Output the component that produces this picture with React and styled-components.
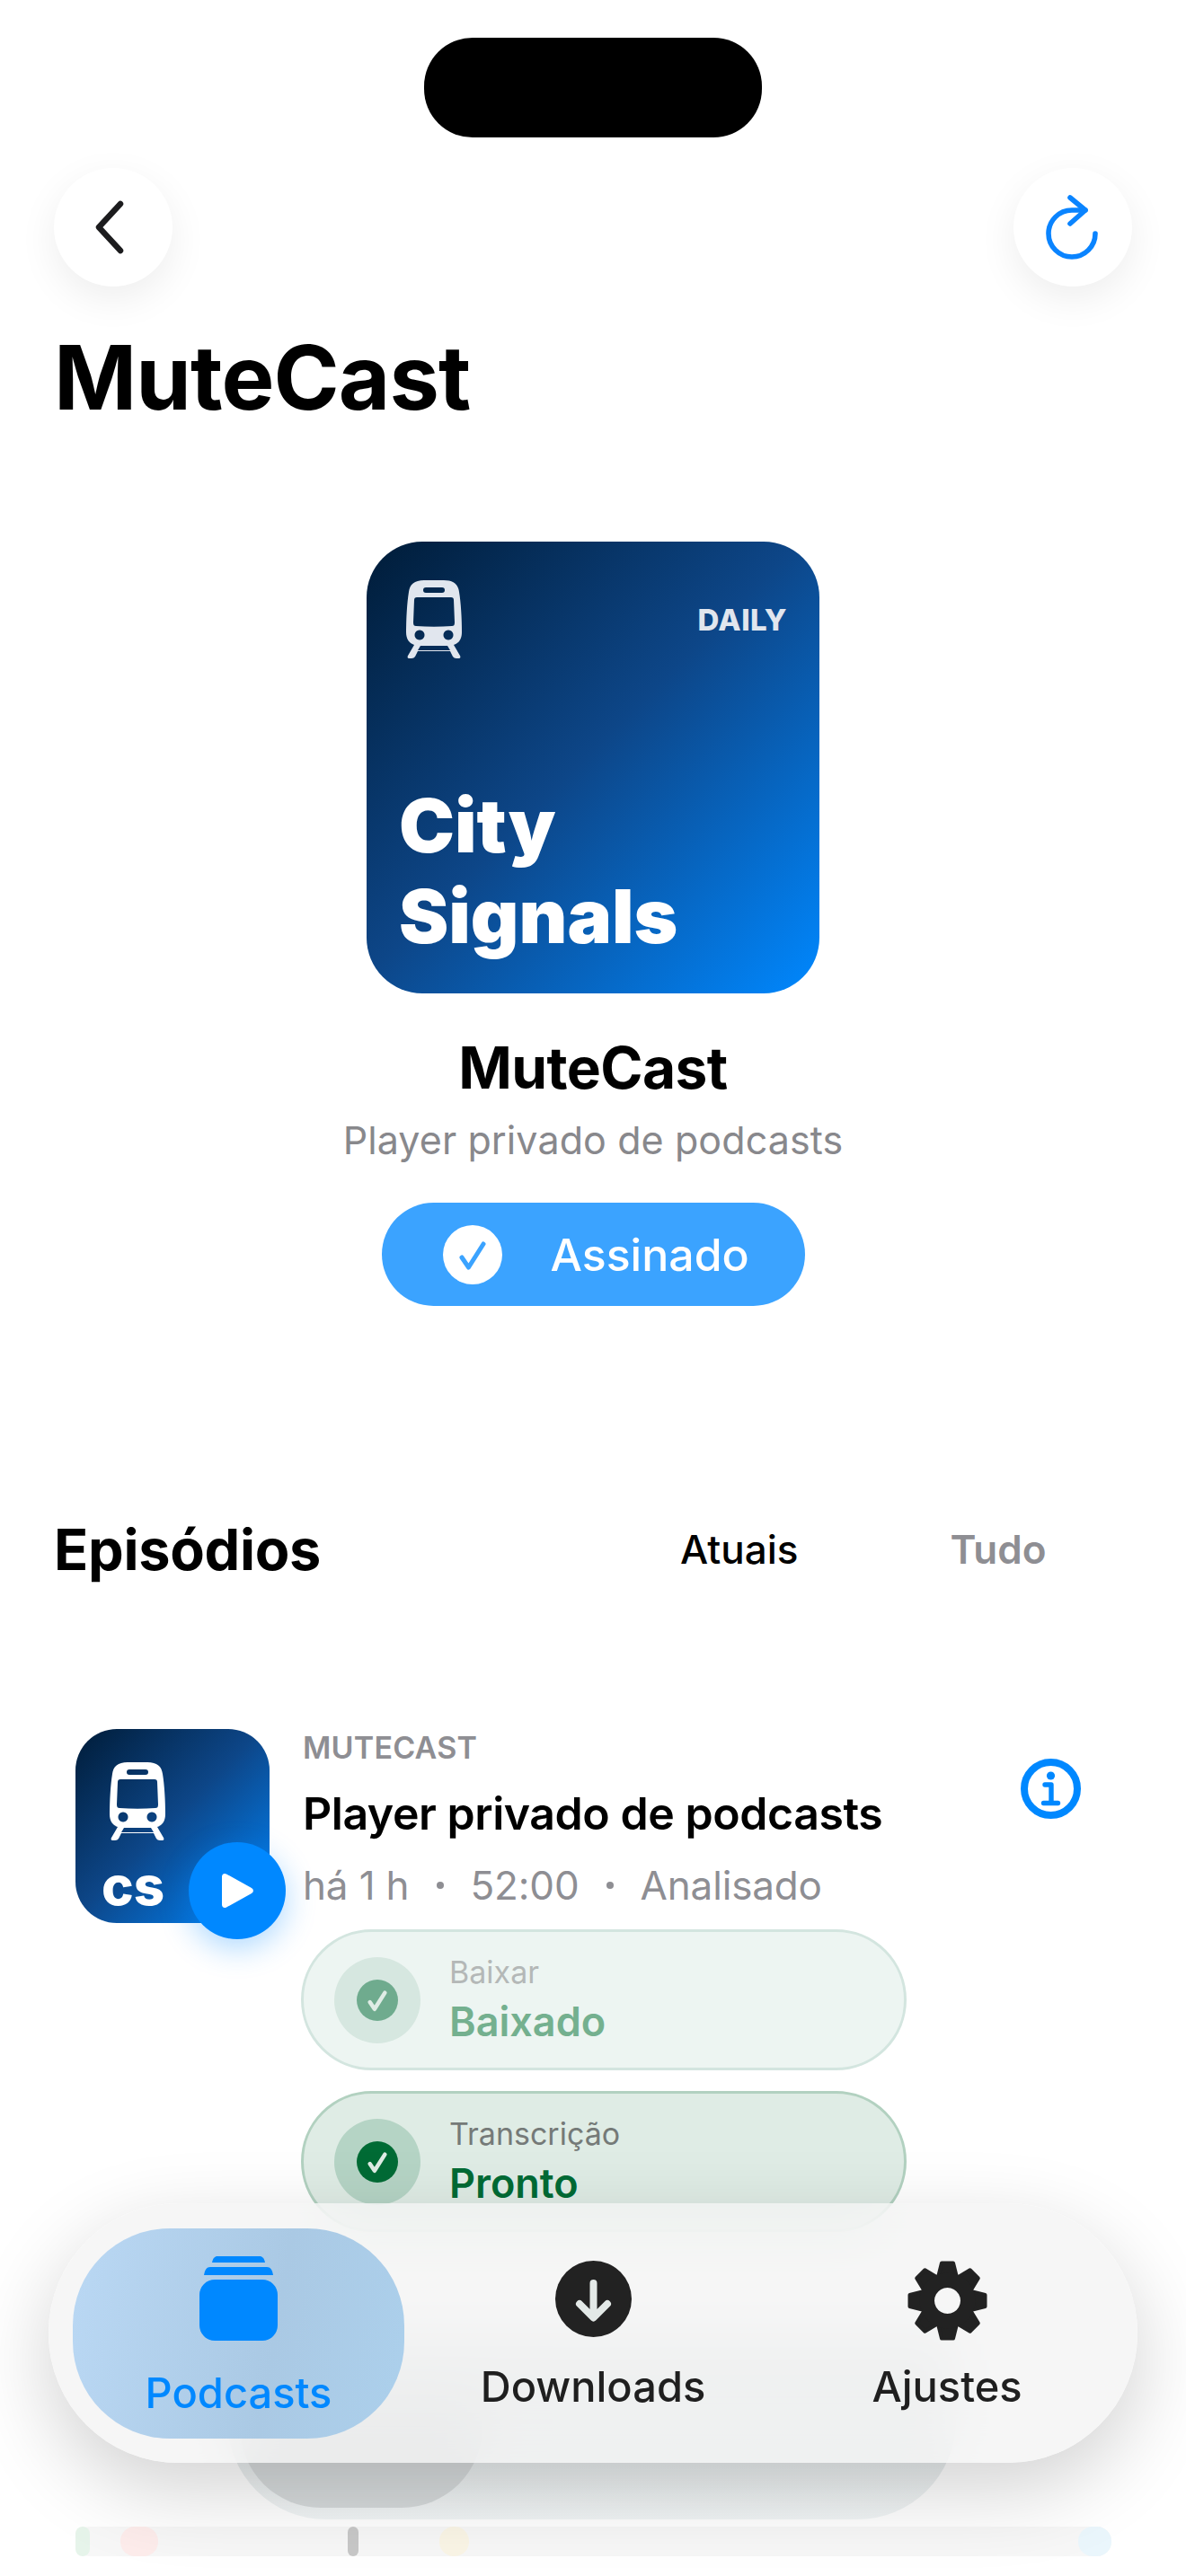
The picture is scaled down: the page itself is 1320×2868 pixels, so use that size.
import React from "react";
import styled, { createGlobalStyle } from "styled-components";

const GlobalStyle = createGlobalStyle`
  html, body { margin: 0; padding: 0; background: #fff; }
  body { font-family: Inter, "Liberation Sans", sans-serif; color: #000; }
`;

const Screen = styled.div`
  position: relative;
  width: 1320px;
  height: 2868px;
  overflow: hidden;
  background: #fff;
`;

const Island = styled.div`
  width: 376px;
  height: 111px;
  margin: 0 auto;
  border-radius: 54px;
  background: #000;
`;

const Content = styled.main`
  padding-top: 42px;
`;

const TopBar = styled.div`
  display: flex;
  justify-content: space-between;
  padding: 34px 60px 0;
`;

const RoundButton = styled.button`
  width: 132px;
  height: 132px;
  padding: 0;
  border: 0;
  border-radius: 50%;
  background: #fff;
  display: flex;
  align-items: center;
  justify-content: center;
  box-shadow: 0 14px 44px rgba(0, 0, 0, 0.07);
`;

const PageTitle = styled.h1`
  margin: 41px 0 0 60px;
  font-size: 99px;
  line-height: 120px;
  font-weight: 700;
  letter-spacing: -0.9px;
`;

const Hero = styled.section`
  display: flex;
  flex-direction: column;
  align-items: center;
  margin-top: 123px;
`;

const Artwork = styled.div`
  width: 504px;
  height: 503px;
  padding: 43px 36px 0;
  box-sizing: border-box;
  border-radius: 62px;
  background: linear-gradient(135deg, #001c38 0%, #0d4688 48%, #0088ff 100%);
  display: flex;
  flex-direction: column;
`;

const ArtTop = styled.div`
  display: flex;
  justify-content: space-between;
  align-items: flex-start;
  padding-left: 8px;
  color: #e1e6ee;
`;

const ArtTag = styled.span`
  margin-top: 25px;
  font-size: 33px;
  line-height: 38px;
  font-weight: 800;
  letter-spacing: 0.5px;
`;

const ArtTitle = styled.div`
  margin-top: 136px;
  font-size: 83px;
  line-height: 101px;
  font-weight: 900;
  color: #fff;
`;

const HeroName = styled.h2`
  margin: 44px 0 0;
  font-size: 64px;
  line-height: 78px;
  font-weight: 700;
  letter-spacing: -0.6px;
`;

const HeroSub = styled.p`
  margin: 15px 0 0;
  font-size: 43px;
  line-height: 52px;
  color: #88888c;
  font-weight: 400;
  letter-spacing: 0.1px;
`;

const SubscribeButton = styled.button`
  margin-top: 44px;
  width: 471px;
  height: 115px;
  padding: 0 0 0 68px;
  border: 0;
  border-radius: 58px;
  background: #3ba3ff;
  color: #fff;
  display: flex;
  align-items: center;
  gap: 54px;
  font: 500 50px/60px Inter, sans-serif;
`;

const CheckDisc = styled.span`
  width: 66px;
  height: 66px;
  border-radius: 50%;
  background: #fff;
  line-height: 0;
`;

const SectionHead = styled.div`
  display: flex;
  align-items: center;
  margin-top: 233px;
  padding-left: 60px;
`;

const SectionTitle = styled.h2`
  margin: 0;
  width: 697px;
  font-size: 63px;
  line-height: 76px;
  font-weight: 700;
  letter-spacing: -0.3px;
`;

const Segment = styled.span`
  font-size: 44px;
  line-height: 54px;
  font-weight: ${(p) => (p.$active ? 500 : 600)};
  color: ${(p) => (p.$active ? "#000" : "#8e8e93")};
  margin-right: ${(p) => (p.$active ? "169px" : "0")};
`;

const Episode = styled.article`
  display: flex;
  margin-top: 162px;
  padding-left: 84px;
`;

const Thumb = styled.div`
  position: relative;
  flex: none;
  width: 216px;
  height: 216px;
  border-radius: 46px;
  background: linear-gradient(135deg, #001c38 0%, #0d4688 48%, #0088ff 100%);
  color: #fff;
  display: flex;
  flex-direction: column;
  padding: 37px 0 0 38px;
  box-sizing: border-box;
`;

const ThumbMark = styled.span`
  margin: 17px 0 0 -9px;
  font-size: 60px;
  line-height: 66px;
  font-weight: 800;
`;

const PlayButton = styled.span`
  position: absolute;
  left: 126px;
  top: 126px;
  width: 108px;
  height: 108px;
  border-radius: 50%;
  background: #0088ff;
  box-shadow: 0 10px 34px rgba(0, 136, 255, 0.32);
  display: flex;
  align-items: center;
  justify-content: center;
`;

const EpisodeBody = styled.div`
  flex: 1;
  padding-left: 37px;
`;

const EpisodeHead = styled.div`
  position: relative;
  height: 223px;
`;

const Show = styled.div`
  font-size: 34px;
  line-height: 42px;
  font-weight: 600;
  color: #8e8e93;
  letter-spacing: 0.2px;
`;

const EpisodeTitle = styled.h3`
  margin: 22px 0 0;
  font-size: 50px;
  line-height: 60px;
  font-weight: 600;
  letter-spacing: -0.45px;
`;

const Meta = styled.div`
  display: flex;
  align-items: center;
  gap: 30px;
  margin-top: 23px;
  font-size: 44px;
  line-height: 54px;
  color: #8e8e93;
  letter-spacing: -0.15px;
`;

const MetaDot = styled.i`
  width: 8px;
  height: 8px;
  border-radius: 50%;
  background: #8e8e93;
`;

const InfoButton = styled.span`
  position: absolute;
  left: 799px;
  top: 33px;
  line-height: 0;
`;

const StatusPill = styled.div`
  width: 674px;
  height: 157px;
  box-sizing: border-box;
  margin: 0 0 23px -2px;
  padding-left: 34px;
  border-radius: 79px;
  border: 3px solid ${(p) => (p.$done ? "#b2d1c0" : "#d3e5df")};
  background: ${(p) => (p.$done ? "#dfece5" : "#edf5f2")};
  display: flex;
  align-items: center;
  gap: 32px;
`;

const StatusHalo = styled.span`
  width: 96px;
  height: 96px;
  border-radius: 50%;
  background: ${(p) => (p.$done ? "#b5d4c5" : "#d6e7e0")};
  display: flex;
  align-items: center;
  justify-content: center;
`;

const StatusDisc = styled.span`
  width: 46px;
  height: 46px;
  border-radius: 50%;
  background: ${(p) => (p.$done ? "#006b35" : "#6fab8e")};
  line-height: 0;
`;

const StatusLabel = styled.div`
  font-size: 34px;
  line-height: 41px;
  color: ${(p) => (p.$done ? "#757a78" : "#b4b8b7")};
`;

const StatusValue = styled.div`
  margin-top: 8px;
  font-size: 45px;
  line-height: 54px;
  font-weight: 600;
  color: ${(p) => (p.$done ? "#006b35" : "#74b08f")};
`;

const GhostCard = styled.div`
  position: absolute;
  left: 253px;
  top: 2600px;
  width: 811px;
  height: 205px;
  border-radius: 0 0 110px 110px;
  background: linear-gradient(180deg, rgba(205, 214, 215, 0.5) 60%, rgba(240, 244, 245, 0.9) 100%);
`;

const GhostInner = styled.div`
  position: absolute;
  left: 14px;
  bottom: 13px;
  width: 270px;
  height: 120px;
  border-radius: 0 0 90px 90px;
  background: #d6dadb;
`;

const Track = styled.div`
  position: absolute;
  left: 84px;
  top: 2813px;
  width: 1153px;
  height: 33px;
  border-radius: 16px;
  background: rgba(0, 0, 0, 0.03);
`;

const TrackMark = styled.span`
  position: absolute;
  top: 0;
  height: 33px;
  border-radius: 16px;
  left: ${(p) => p.$left}px;
  width: ${(p) => p.$width}px;
  background: ${(p) => p.$color};
`;

const TabBar = styled.nav`
  position: absolute;
  left: 54px;
  top: 2453px;
  width: 1212px;
  height: 289px;
  box-sizing: border-box;
  padding: 28px 0 0 27px;
  border-radius: 144px;
  background: rgba(243, 243, 243, 0.72);
  backdrop-filter: blur(30px);
  box-shadow: 0 30px 90px rgba(0, 0, 0, 0.18);
  display: grid;
  grid-template-columns: 369px 420px 368px;
  align-items: start;
`;

const Tab = styled.div`
  height: 234px;
  box-sizing: border-box;
  padding-top: ${(p) => (p.$active ? "31px" : "36px")};
  border-radius: 108px;
  background: ${(p) =>
    p.$active ? "linear-gradient(100deg, #bad8f4 0%, #aac9e4 60%, #acd0ec 100%)" : "transparent"};
  display: flex;
  flex-direction: column;
  align-items: center;
  color: ${(p) => (p.$active ? "#0088ff" : "#1f1f1f")};
`;

const TabIcon = styled.span`
  height: 94px;
  line-height: 0;
`;

const TabLabel = styled.span`
  margin-top: ${(p) => (p.$active ? "31px" : "19px")};
  font-size: 47px;
  line-height: 54px;
  font-weight: 500;
`;

const TrainIcon = ({ color = "#fff" }) => (
  <svg width="62" height="87" viewBox="0 0 62 87">
    <path
      fill={color}
      fillRule="evenodd"
      d="M20 0h22c11 0 16 5 17 13 2 12 3 30 3 45 0 7-3 12-9 14l7 12c1 2 0 3-2 3h-2c-2 0-3-1-4-2l-3-6H13l-3 6c-1 1-2 2-4 2H4c-2 0-3-1-2-3l7-12c-6-2-9-7-9-14C0 43 1 25 3 13 4 5 9 0 20 0z
      M22 8a3 3 0 0 0 0 6h18a3 3 0 0 0 0-6z
      M12 19c-2 0-3 1-3 3l-1 25c0 3 1 4 3 4 13 1 27 1 40 0 2 0 3-1 3-4l-1-25c0-2-1-3-3-3z
      M15 55.500a5.500 5.500 0 1 0 .01 0z
      M47 55.500a5.500 5.500 0 1 0 .01 0z
      M16 73l-3 5h36l-3-5z"
    />
  </svg>
);

const BackIcon = () => (
  <svg width="34" height="60" viewBox="0 0 34 60" fill="none" style={{ marginRight: 9 }}>
    <path d="M29 4 5 30l24 26" stroke="#1c1c1e" strokeWidth="6.5" strokeLinecap="round" strokeLinejoin="round" />
  </svg>
);

const RefreshIcon = () => (
  <svg width="70" height="75" viewBox="0 0 70 75" fill="none" stroke="#0a84ff" strokeLinecap="round" strokeLinejoin="round" strokeWidth="5.6">
    <path d="M60 44a26 26 0 1 1-26-26h15" />
    <path d="M32 4l17 14-17 15" />
  </svg>
);

const InfoIcon = () => (
  <svg width="67" height="67" viewBox="0 0 67 67" fill="none">
    <circle cx="33.500" cy="33.500" r="29.500" stroke="#0088ff" strokeWidth="8" />
    <circle cx="33.500" cy="19" r="4.600" fill="#0088ff" />
    <path d="M27 29h7v20M25.500 49.500h16" stroke="#0088ff" strokeWidth="5.400" strokeLinecap="round" strokeLinejoin="round" />
  </svg>
);

const PlayIcon = () => (
  <svg width="38" height="40" viewBox="0 0 38 40">
    <path fill="#fff" d="M2 4.500C2 1.500 4.500 0 7 1.500l28 15.500c2.500 1.500 2.500 4.500 0 6L7 38.500c-2.500 1.500-5 0-5-3z" />
  </svg>
);

const StackIcon = () => (
  <svg width="87" height="94" viewBox="0 0 87 94" fill="#0088ff">
    <path d="M20 0h47c3 0 5 2 6 7H14c1-5 3-7 6-7z" />
    <path d="M12 12h63c4 0 6 3 7 9H5c1-6 3-9 7-9z" />
    <rect y="26" width="87" height="68" rx="17" />
  </svg>
);

const DownloadIcon = () => (
  <svg width="85" height="85" viewBox="0 0 85 85">
    <circle cx="42.500" cy="42.500" r="42.500" fill="#222" />
    <path d="M42.500 25v38M27 48l15.500 15.500L58 48" fill="none" stroke="#e3e9e7" strokeWidth="8" strokeLinecap="round" strokeLinejoin="round" />
  </svg>
);

const GearIcon = () => (
  <svg width="89" height="89" viewBox="-44.500 -44.500 89 89">
    <g fill="#222" stroke="#222" strokeWidth="4" strokeLinejoin="round">
      {[0, 45, 90, 135, 180, 225, 270, 315].map((deg) => (
        <path key={deg} transform={`rotate(${deg})`} d="M-6.500-42h13l4 16h-21z" />
      ))}
    </g>
    <path fill="#222" fillRule="evenodd" d="M0-31a31 31 0 1 0 .01 0zM0-14.500a14.500 14.500 0 1 1-.01 0z" />
  </svg>
);

// thin tick used on the subscribe button and on the status rows
const Tick = ({ size, color, width }) => (
  <svg width={size} height={size} viewBox="0 0 66 66" fill="none">
    <path d="M21 36l7.500 11L45 21" stroke={color} strokeWidth={width} strokeLinecap="round" strokeLinejoin="round" />
  </svg>
);

const statuses = [
  { label: "Baixar", value: "Baixado", done: false },
  { label: "Transcrição", value: "Pronto", done: true },
];

const marks = [
  { left: 0, width: 16, color: "#e6f4ea" },
  { left: 50, width: 42, color: "#fdeceb" },
  { left: 303, width: 12, color: "#c8c8c8" },
  { left: 405, width: 33, color: "#faf5e6" },
  { left: 1116, width: 37, color: "#eaf6fc" },
];

export default function App() {
  return (
    <Screen>
      <GlobalStyle />
      <Content>
        <Island />
        <TopBar>
          <RoundButton><BackIcon /></RoundButton>
          <RoundButton><RefreshIcon /></RoundButton>
        </TopBar>
        <PageTitle>MuteCast</PageTitle>

        <Hero>
          <Artwork>
            <ArtTop>
              <TrainIcon color="#e1e6ee" />
              <ArtTag>DAILY</ArtTag>
            </ArtTop>
            <ArtTitle>City<br />Signals</ArtTitle>
          </Artwork>
          <HeroName>MuteCast</HeroName>
          <HeroSub>Player privado de podcasts</HeroSub>
          <SubscribeButton>
            <CheckDisc><Tick size={66} color="#3ba3ff" width={5} /></CheckDisc>
            Assinado
          </SubscribeButton>
        </Hero>

        <SectionHead>
          <SectionTitle>Episódios</SectionTitle>
          <Segment $active>Atuais</Segment>
          <Segment>Tudo</Segment>
        </SectionHead>

        <Episode>
          <Thumb>
            <TrainIcon />
            <ThumbMark>cs</ThumbMark>
            <PlayButton><PlayIcon /></PlayButton>
          </Thumb>
          <EpisodeBody>
            <EpisodeHead>
              <Show>MUTECAST</Show>
              <EpisodeTitle>Player privado de podcasts</EpisodeTitle>
              <Meta>
                <span>há 1 h</span><MetaDot />
                <span>52:00</span><MetaDot />
                <span>Analisado</span>
              </Meta>
              <InfoButton><InfoIcon /></InfoButton>
            </EpisodeHead>
            {statuses.map((s) => (
              <StatusPill key={s.label} $done={s.done}>
                <StatusHalo $done={s.done}>
                  <StatusDisc $done={s.done}><Tick size={46} color="#dfece5" width={6.500} /></StatusDisc>
                </StatusHalo>
                <div>
                  <StatusLabel $done={s.done}>{s.label}</StatusLabel>
                  <StatusValue $done={s.done}>{s.value}</StatusValue>
                </div>
              </StatusPill>
            ))}
          </EpisodeBody>
        </Episode>
      </Content>

      <GhostCard><GhostInner /></GhostCard>
      <Track>
        {marks.map((m) => (
          <TrackMark key={m.left} $left={m.left} $width={m.width} $color={m.color} />
        ))}
      </Track>

      <TabBar>
        <Tab $active>
          <TabIcon><StackIcon /></TabIcon>
          <TabLabel $active>Podcasts</TabLabel>
        </Tab>
        <Tab>
          <TabIcon><DownloadIcon /></TabIcon>
          <TabLabel>Downloads</TabLabel>
        </Tab>
        <Tab>
          <TabIcon><GearIcon /></TabIcon>
          <TabLabel>Ajustes</TabLabel>
        </Tab>
      </TabBar>
    </Screen>
  );
}
